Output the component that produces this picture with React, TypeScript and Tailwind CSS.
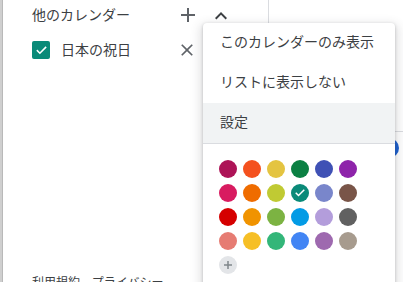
import { Fragment } from 'react';

const swatches: string[][] = [
  ['#ad1457', '#f4511e', '#e4c441', '#0b8043', '#3f51b5', '#8e24aa'],
  ['#d81b60', '#ef6c00', '#c0ca33', '#0a8a78', '#7986cb', '#795548'],
  ['#d50000', '#f09300', '#7cb342', '#039be5', '#b39ddb', '#616161'],
  ['#e67c73', '#f6bf26', '#33b679', '#4285f4', '#9e69af', '#a79b8e'],
];

const selected = '#0a8a78';

function Check({ size = 12 }: { size?: number }) {
  return (
    <svg width={size} height={size} viewBox="0 0 24 24" fill="none">
      <path d="M4.5 12.5l4.5 4.5L19.5 6.5" stroke="white" strokeWidth="3" strokeLinecap="square" />
    </svg>
  );
}

function ColorMenu() {
  return (
    <div className="absolute left-[203px] top-[23px] w-[192px] h-[280px] bg-white rounded-[4px] shadow-[0_4px_10px_4px_rgba(60,64,67,0.13),0_1px_3px_0_rgba(60,64,67,0.3)]">
      <div className="h-[40px] px-[17px] pb-[3px] flex items-center">このカレンダーのみ表示</div>
      <div className="h-[40px] px-[17px] pb-[3px] flex items-center">リストに表示しない</div>
      <div className="h-[40px] px-[17px] pb-[3px] flex items-center bg-[#f1f3f4]">設定</div>
      <div className="border-t border-[#dadce0] pt-[16px] pl-[16px]">
        <div className="grid grid-cols-6 gap-[6px] w-fit">
          {swatches.map((row, r) => (
            <Fragment key={r}>
              {row.map((c) => (
                <div
                  key={c}
                  className="w-[18px] h-[18px] rounded-full flex items-center justify-center"
                  style={{ backgroundColor: c }}
                >
                  {c === selected && <Check size={12} />}
                </div>
              ))}
            </Fragment>
          ))}
          <div className="w-[18px] h-[18px] rounded-full bg-[#e3e5e8] flex items-center justify-center">
            <svg width="12" height="12" viewBox="0 0 24 24">
              <path d="M20 13.5h-6.5V20h-3v-6.5H4v-3h6.5V4h3v6.5H20z" fill="#80868b" />
            </svg>
          </div>
        </div>
      </div>
    </div>
  );
}

export default function App() {
  return (
    <div
      className="relative w-[403px] h-[282px] overflow-hidden bg-white text-[#3c4043] text-[14px]"
      style={{ fontFamily: '"Noto Sans CJK JP", "Noto Sans", sans-serif' }}
    >
      <div className="flex h-full">
        <div className="w-[3px] shrink-0 bg-[#cfcfcf] border-r border-[#b9b9b9]" />
        <aside className="w-[266px] shrink-0 border-r border-[#dadce0] pl-[29px]">
          <div className="h-[30px] flex items-center">
            <span className="w-[144px] shrink-0 pb-[1px]">他のカレンダー</span>
            <svg width="24" height="24" viewBox="0 0 24 24">
              <path d="M19 13h-6v6h-2v-6H5v-2h6V5h2v6h6v2z" fill="#5f6368" />
            </svg>
            <svg width="24" height="24" viewBox="0 0 24 24" className="ml-[9px] mt-[1px]">
              <path d="M7.41 15.41L12 10.83l4.59 4.58L18 14l-6-6-6 6z" fill="#3c4043" />
            </svg>
          </div>
          <div className="h-[40px] flex items-center">
            <div className="w-[18px] h-[18px] rounded-[2px] bg-[#0a8a78] flex items-center justify-center">
              <Check size={13} />
            </div>
            <span className="ml-[11px] w-[116px] pb-[1px]">日本の祝日</span>
            <svg width="20" height="20" viewBox="0 0 24 24">
              <path
                d="M19 6.41L17.59 5 12 10.59 6.41 5 5 6.41 10.59 12 5 17.59 6.41 19 12 13.41 17.59 19 19 17.59 13.41 12z"
                fill="#5f6368"
              />
            </svg>
          </div>
          <div className="mt-[204px] text-[12px] leading-[16px] whitespace-nowrap">利用規約 – プライバシー</div>
        </aside>
        <main className="flex-1">
          <div className="mt-[131px] border-t border-[#dadce0]" />
          <div className="flex justify-end pr-[4px] mt-[6px]">
            <div className="w-[20px] h-[20px] rounded-full bg-[#1a5fd0]" />
          </div>
        </main>
      </div>
      <ColorMenu />
    </div>
  );
}
